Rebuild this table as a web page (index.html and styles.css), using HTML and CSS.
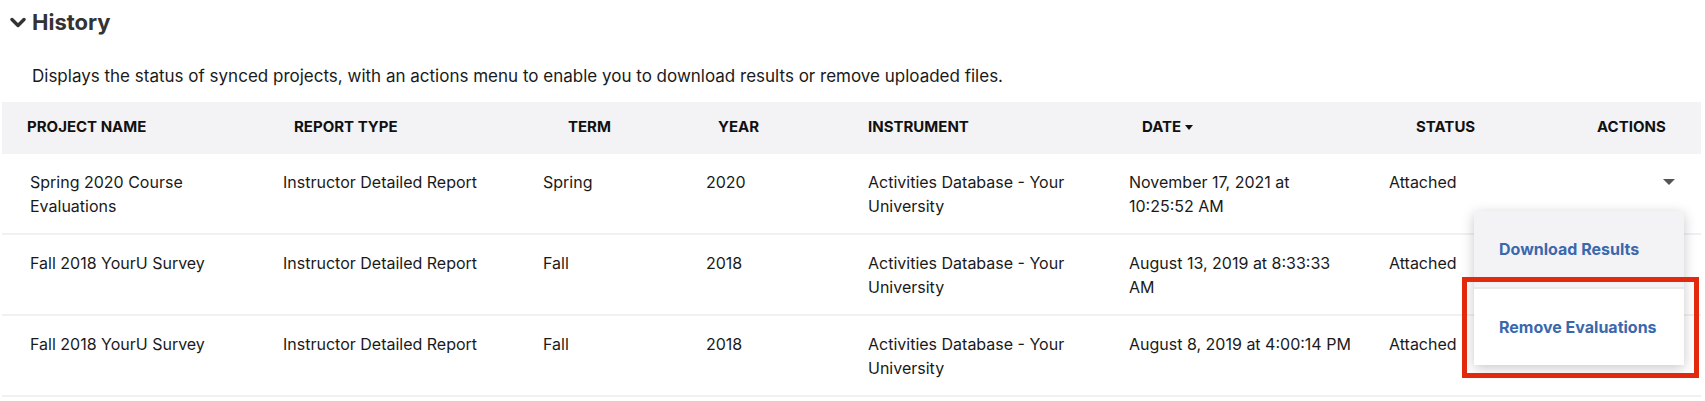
FILE: index.html
```html
<!DOCTYPE html>
<html lang="en">
<head>
  <meta charset="UTF-8">
  <title>History</title>
  <link rel="stylesheet" href="styles.css">
</head>
<body>
  <section class="history">
    <h2 class="section-title">
      <svg class="chevron" width="16" height="11" viewBox="0 0 16 11" aria-hidden="true">
        <path d="M2 2.5 L8 8.5 L14 2.5" fill="none" stroke="currentColor" stroke-width="3.4" stroke-linecap="round" stroke-linejoin="round"/>
      </svg>
      History
    </h2>
    <p class="section-desc">Displays the status of synced projects, with an actions menu to enable you to download results or remove uploaded files.</p>

    <div class="history-table">
      <div class="thead">
        <div>Project Name</div>
        <div>Report Type</div>
        <div>Term</div>
        <div>Year</div>
        <div>Instrument</div>
        <div class="sorted">Date <span class="sort-caret"></span></div>
        <div>Status</div>
        <div>Actions</div>
      </div>

      <div class="row">
        <div class="cell">Spring 2020 Course Evaluations</div>
        <div class="cell">Instructor Detailed Report</div>
        <div class="cell">Spring</div>
        <div class="cell">2020</div>
        <div class="cell">Activities Database - Your University</div>
        <div class="cell">November 17, 2021 at<br>10:25:52 AM</div>
        <div class="cell">Attached</div>
        <div class="cell actions">
          <button class="menu-toggle" aria-label="Actions"><span class="caret"></span></button>
          <ul class="menu">
            <li class="menu-item active">Download Results</li>
            <li class="menu-item highlighted">Remove Evaluations</li>
          </ul>
        </div>
      </div>

      <div class="row">
        <div class="cell">Fall 2018 YourU Survey</div>
        <div class="cell">Instructor Detailed Report</div>
        <div class="cell">Fall</div>
        <div class="cell">2018</div>
        <div class="cell">Activities Database - Your University</div>
        <div class="cell">August 13, 2019 at 8:33:33<br>AM</div>
        <div class="cell">Attached</div>
        <div class="cell actions"></div>
      </div>

      <div class="row">
        <div class="cell">Fall 2018 YourU Survey</div>
        <div class="cell">Instructor Detailed Report</div>
        <div class="cell">Fall</div>
        <div class="cell">2018</div>
        <div class="cell">Activities Database - Your University</div>
        <div class="cell">August 8, 2019 at 4:00:14 PM</div>
        <div class="cell">Attached</div>
        <div class="cell actions"></div>
      </div>
    </div>
  </section>
</body>
</html>
```

FILE: styles.css
```css
body {
  margin: 0;
  font-family: Inter, "Noto Sans", Arial, sans-serif;
  color: #1a1a1a;
  background: #fff;
}
.history {
  margin: 0 4px 0 2px;
}
.section-title {
  display: flex;
  align-items: center;
  gap: 6px;
  margin: 0;
  padding: 8px 0 0 8px;
  font-size: 22px;
  line-height: 28px;
  font-weight: 700;
  color: #333;
}
.chevron {
  color: #333;
  margin-top: 1px;
}
.section-desc {
  margin: 28px 0 14px 30px;
  font-size: 17px;
  line-height: 24px;
}

/* Tabulka historie */
.thead {
  display: grid;
  grid-template-columns: 267px 274px 150px 150px 274px 274px 181px 1fr;
  padding: 15px 0 17px 25px;
  background: #f3f3f5;
  font-size: 15px;
  line-height: 20px;
  font-weight: 700;
  text-transform: uppercase;
  color: #111;
}
.sorted {
  display: flex;
  align-items: center;
  gap: 4px;
}
.sort-caret {
  width: 0;
  height: 0;
  border-left: 4px solid transparent;
  border-right: 4px solid transparent;
  border-top: 5px solid #111;
}
.row {
  display: grid;
  grid-template-columns: 253px 260px 163px 162px 261px 260px 1fr 120px;
  padding: 16px 0 15px 28px;
  border-bottom: 2px solid #f1f1f3;
  font-size: 16px;
  line-height: 24px;
}
.cell {
  padding-right: 24px;
}
.actions {
  position: relative;
  display: flex;
  justify-content: flex-end;
  align-items: flex-start;
  padding-right: 26px;
}
.menu-toggle {
  border: 0;
  background: none;
  padding: 0;
  height: 24px;
  display: flex;
  align-items: center;
  cursor: pointer;
}
.caret {
  width: 0;
  height: 0;
  border-left: 6px solid transparent;
  border-right: 6px solid transparent;
  border-top: 6px solid #555;
}

/* Menu akcí */
.menu {
  position: absolute;
  top: 41px;
  right: 17px;
  width: 210px;
  margin: 0;
  padding: 0;
  list-style: none;
  background: #fff;
  box-shadow: 0 3px 12px rgba(0, 0, 0, 0.22);
  z-index: 2;
}
.menu-item {
  position: relative;
  padding: 26px 0 26px 25px;
  font-size: 16px;
  line-height: 24px;
  font-weight: 700;
  color: #3a68ad;
  cursor: pointer;
}
.menu-item.active {
  background: #f3f3f5;
}
.menu-item + .menu-item {
  border-top: 2px solid #e9e9ec;
}
.menu-item.highlighted::after {
  content: "";
  position: absolute;
  top: -12px;
  left: -12px;
  right: -15px;
  bottom: -13px;
  border: 5px solid #e3290d;
}
```
